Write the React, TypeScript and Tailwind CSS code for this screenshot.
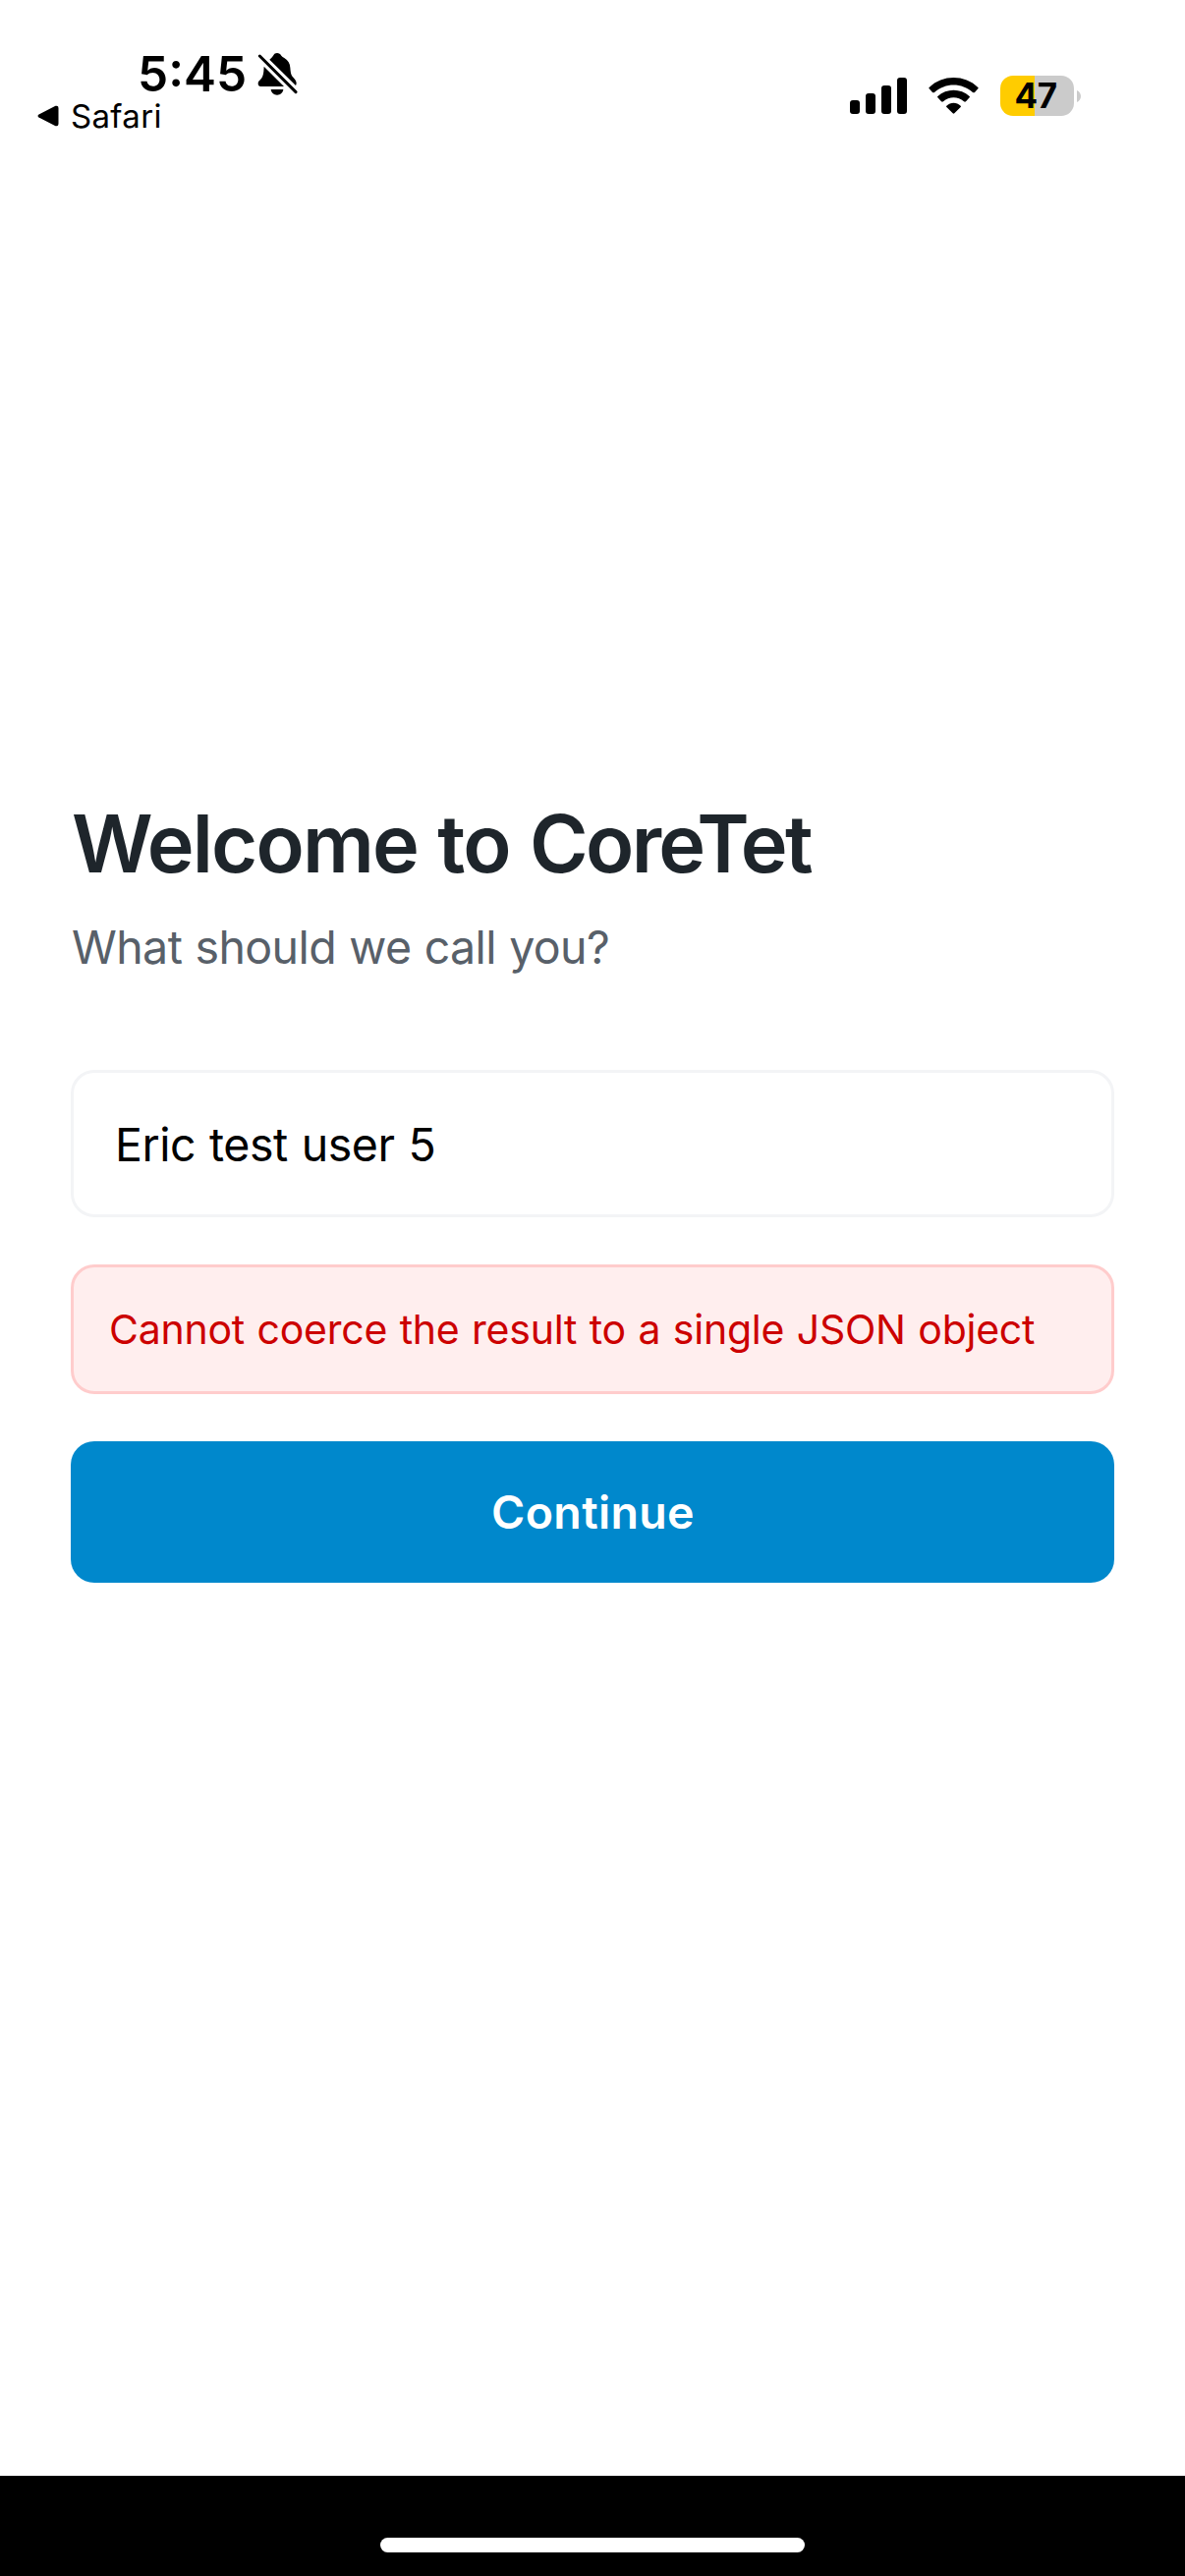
function BellSlashIcon() {
  return (
    <svg className="h-[46px] w-[42px] shrink-0" viewBox="723 36 126 138" fill="black">
      <path d="M763 62C769 56 772 53 774 50C777 44 781 42 786 42C792 42 796 45 799 50C801 53 804 55 808 57C820 64 825 74 826 86C827 98 828 105 831 111C836 118 845 125 845 134C845 137 844 139 843 141Z" />
      <path d="M746 83L807 144L736 144C730 144 728 140 728 135C728 130 731 127 735 123C741 117 744 109 745 98Z" />
      <path d="M767 153L805 153C804 163 796 170 786 170C776 170 768 163 767 153Z" />
      <path d="M734 52L842 160" stroke="white" strokeWidth="20" strokeLinecap="butt" />
      <path d="M733 51L843 161" stroke="black" strokeWidth="9" strokeLinecap="round" />
    </svg>
  );
}

function SignalIcon() {
  return (
    <svg className="h-[37px] w-[58px]" viewBox="0 0 58 37" fill="black">
      <rect x="0" y="23" width="10" height="14" rx="3" />
      <rect x="16" y="16" width="10" height="21" rx="3" />
      <rect x="32" y="8" width="10" height="29" rx="3" />
      <rect x="48" y="0" width="10" height="37" rx="3" />
    </svg>
  );
}

function WifiIcon() {
  return (
    <svg className="h-[37px] w-[51px]" viewBox="315 57 153 111" fill="black">
      <path d="M317 87C357 47 426 47 466 87Q468 89 466 91L456 102Q453 104 450 102C417 72 366 72 333 102Q330 104 327 102L317 91Q315 89 317 87Z" />
      <path d="M343 114C370 89 413 89 440 114Q442 116 440 118L429 130Q426 132 423 130C405 114 378 114 360 130Q357 132 354 130L343 118Q341 116 343 114Z" />
      <path d="M370 143C382 131 401 131 413 143Q415 145 413 147L394 166Q391.500 168 389 166L370 147Q368 145 370 143Z" />
    </svg>
  );
}

function Battery() {
  return (
    <div className="flex items-center gap-[3px]">
      <div className="flex h-[41px] w-[75px] items-center justify-center overflow-hidden rounded-[13px] bg-[linear-gradient(to_right,#ffcc00_35.300px,#cbcbcb_35.300px)] pr-[3px]">
        <span className="text-[35px] leading-[41px] font-bold tracking-[-0.600px]">47</span>
      </div>
      <svg className="h-[12px] w-[4px]" viewBox="0 0 4 12" fill="#cbcbcb">
        <path d="M0 0C2.500 1 4 3.500 4 6S2.500 11 0 12Z" />
      </svg>
    </div>
  );
}

function StatusBar() {
  return (
    <header className="flex h-[150px] shrink-0 items-start justify-between pr-[106px] text-black">
      <div className="pt-[45px]">
        <div className="flex h-[60px] items-center pl-[140px]">
          <span className="w-[121px] text-[49.500px] leading-[60px] font-semibold">5:45</span>
          <BellSlashIcon />
        </div>
        <div className="flex h-[26px] items-center gap-[12px] pl-[38px]">
          <svg className="h-[22px] w-[22px]" viewBox="0 0 22 22" fill="black">
            <path d="M1.500 9.500L18.500 0.800Q21.500 0 21.500 3V19Q21.500 22 18.500 21.200L1.500 12.500Q-0.500 11 1.500 9.500Z" />
          </svg>
          <span className="text-[33px] leading-[26px] tracking-[0.320px]">Safari</span>
        </div>
      </div>
      <div className="flex items-center gap-[22px] pt-[77px]">
        <SignalIcon />
        <WifiIcon />
        <Battery />
      </div>
    </header>
  );
}

export default function App() {
  return (
    <div className="flex h-[2622px] w-[1206px] flex-col overflow-hidden bg-white font-['Inter',sans-serif]">
      <StatusBar />
      <main className="flex flex-1 flex-col px-[72px] pt-[659px]">
        <h1 className="pl-px text-[81px] leading-[101px] font-semibold tracking-[-1.850px] whitespace-nowrap text-[#1e252b] [word-spacing:1.700px]">
          Welcome to <span className="tracking-[-2.670px]">CoreTet</span>
        </h1>
        <p className="mt-[18px] pl-px text-[46.500px] leading-[72px] tracking-[-0.600px] text-[#586069] [word-spacing:0.780px]">
          What should we call you?
        </p>
        <input
          className="mt-[89px] h-[150px] rounded-[24px] border-[3px] border-[#f3f4f6] bg-white px-[42px] pt-[2px] text-[46.500px] tracking-[-0.500px] text-black outline-none [word-spacing:1.500px]"
          defaultValue="Eric test user 5"
          aria-label="Your name"
        />
        <div
          role="alert"
          className="mt-[48px] flex h-[132px] items-center rounded-[24px] border-[3px] border-[#ffcccc] bg-[#ffeeee] pt-[2px] pl-[36px] text-[41px] tracking-[-0.250px] whitespace-nowrap text-[#cc0000] [word-spacing:1.350px]"
        >
          Cannot coerce the result to a single JSON object
        </div>
        <button className="mt-[48px] h-[144px] rounded-[24px] bg-[#0088cc] pt-[2px] pl-px text-[46.500px] font-semibold tracking-[0.353px] text-white">
          Continue
        </button>
      </main>
      <footer className="flex h-[102px] shrink-0 items-start justify-center bg-black pt-[63px]">
        <div className="h-[15px] w-[432px] rounded-full bg-white" />
      </footer>
    </div>
  );
}
